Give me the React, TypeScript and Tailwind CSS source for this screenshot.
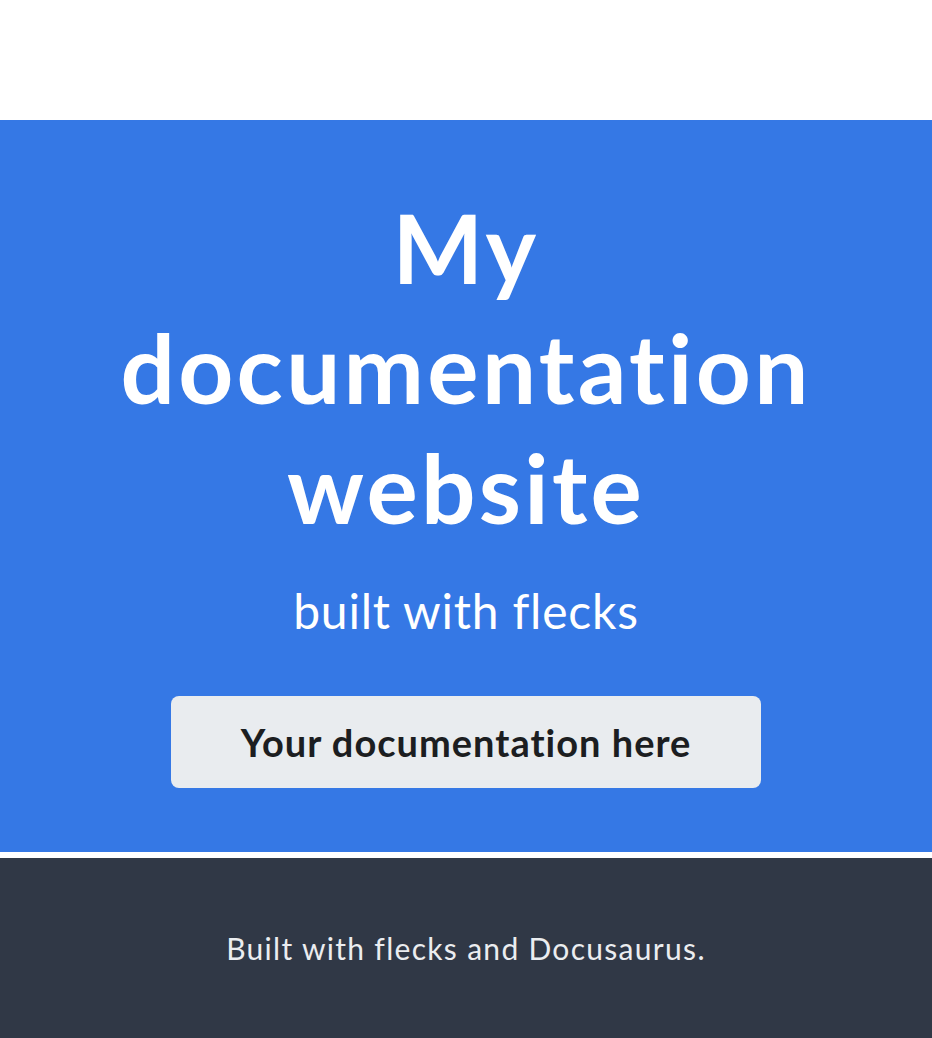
export default function App() {
  return (
    <div className="min-h-[1038px] bg-white flex flex-col [font-variant-ligatures:none]" style={{ fontFamily: '"Lato", "Open Sans", sans-serif' }}>
      <div className="h-[120px] bg-white" />
      <section className="bg-[#3578e5] h-[732px] flex flex-col items-center pt-[67px]">
        <h1 className="text-white font-bold text-[96px] leading-[120px] tracking-[3.3px] text-center w-[760px]">
          My documentation website
        </h1>
        <p className="text-white text-[48px] leading-[60px] tracking-[0.8px] mt-[34px]">built with flecks</p>
        <a className="mt-[55px] w-[590px] h-[92px] rounded-[8px] bg-[#e9ecef] flex items-center justify-center text-[#1c1e21] font-bold text-[38px] tracking-[1px]">
          Your documentation here
        </a>
      </section>
      <div className="h-[6px] bg-white" />
      <footer className="bg-[#303846] flex-1 h-[180px] flex items-center justify-center">
        <p className="text-[#ebedf0] text-[30px] tracking-[1.3px]">Built with flecks and Docusaurus.</p>
      </footer>
    </div>
  );
}
